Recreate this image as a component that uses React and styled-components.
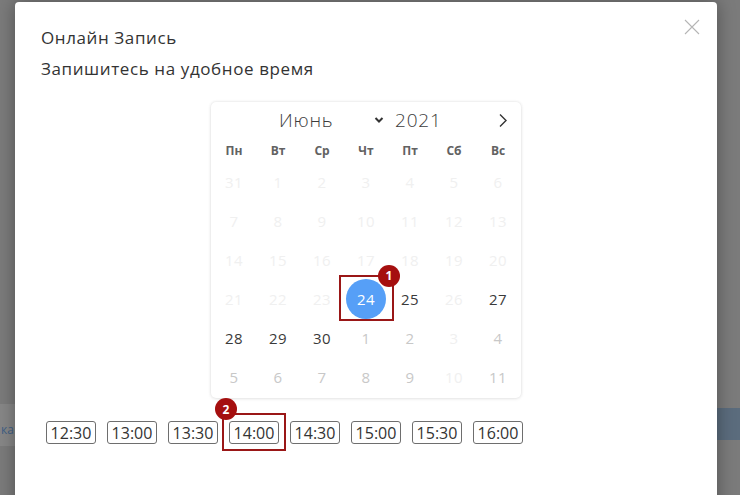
import styled, { createGlobalStyle } from 'styled-components';

const GlobalStyle = createGlobalStyle`
	html, body {
		margin: 0;
		padding: 0;
	}
	body {
		background: linear-gradient(to bottom, #7b7b7b 0, #7b7b7b 408px, #5b6c7d 408px, #5b6c7d 440px, #7b7b7b 440px);
		font-family: 'Open Sans', 'Liberation Sans', sans-serif;
		overflow: hidden;
	}
`;

const weekdays = ['Пн', 'Вт', 'Ср', 'Чт', 'Пт', 'Сб', 'Вс'];

// kind: off = disabled, next = other month (enabled), on = available, sel = chosen
const days = [
	['31', 'off'], ['1', 'off'], ['2', 'off'], ['3', 'off'], ['4', 'off'], ['5', 'off'], ['6', 'off'],
	['7', 'off'], ['8', 'off'], ['9', 'off'], ['10', 'off'], ['11', 'off'], ['12', 'off'], ['13', 'off'],
	['14', 'off'], ['15', 'off'], ['16', 'off'], ['17', 'off'], ['18', 'off'], ['19', 'off'], ['20', 'off'],
	['21', 'off'], ['22', 'off'], ['23', 'off'], ['24', 'sel'], ['25', 'on'], ['26', 'off'], ['27', 'on'],
	['28', 'on'], ['29', 'on'], ['30', 'on'], ['1', 'next'], ['2', 'next'], ['3', 'off'], ['4', 'next'],
	['5', 'next'], ['6', 'next'], ['7', 'next'], ['8', 'next'], ['9', 'next'], ['10', 'off'], ['11', 'next'],
];

const times = ['12:30', '13:00', '13:30', '14:00', '14:30', '15:00', '15:30', '16:00'];

const dayColors = {
	off: '#f0f0f0',
	next: '#c8c8c8',
	on: '#3a3a3a',
	sel: '#ffffff',
};

export default function App() {
	return (
		<>
			<GlobalStyle />
			<Page>
				<Gutter>
					<PeekText>ка</PeekText>
				</Gutter>
				<Modal>
					<Close aria-label="Закрыть">
						<svg width="16" height="16" viewBox="0 0 16 16">
							<path d="M1 1 L15 15 M15 1 L1 15" stroke="#b5b5b5" strokeWidth="1.1" fill="none" />
						</svg>
					</Close>
					<Title>Онлайн Запись</Title>
					<Subtitle>Запишитесь на удобное время</Subtitle>

					<Calendar>
						<MonthBar>
							<Month>Июнь</Month>
							<svg width="10" height="8" viewBox="0 0 10 8">
								<path d="M1.5 2 L5 5.5 L8.5 2" stroke="#333" strokeWidth="2" fill="none" />
							</svg>
							<Year>2021</Year>
							<NextArrow>
								<svg width="10" height="15" viewBox="0 0 10 15">
									<path d="M2 1.5 L8 7.5 L2 13.5" stroke="#333" strokeWidth="1.4" fill="none" />
								</svg>
							</NextArrow>
						</MonthBar>
						<Weekdays>
							{weekdays.map((w) => (
								<Weekday key={w}>{w}</Weekday>
							))}
						</Weekdays>
						<Days>
							{days.map(([d, kind], i) => (
								<Day key={i} kind={kind}>
									{kind === 'sel' ? (
										<Marked>
											<Selected>{d}</Selected>
											<HighlightBox />
											<Badge style={{ top: -14, right: -14 }}>1</Badge>
										</Marked>
									) : (
										d
									)}
								</Day>
							))}
						</Days>
					</Calendar>

					<Times>
						{times.map((t) =>
							t === '14:00' ? (
								<Marked key={t}>
									<Slot>{t}</Slot>
									<SlotBox />
									<Badge style={{ top: -23, left: -14 }}>2</Badge>
								</Marked>
							) : (
								<Slot key={t}>{t}</Slot>
							)
						)}
					</Times>
				</Modal>
			</Page>
		</>
	);
}

const Page = styled.div`
	display: flex;
	height: 495px;
	overflow: hidden;
`;

const Gutter = styled.div`
	width: 15px;
	flex-shrink: 0;
	display: flex;
	justify-content: flex-start;
	align-items: flex-start;
	padding-top: 420px;
	box-sizing: border-box;
	background: linear-gradient(to bottom, #7b7b7b 0, #7b7b7b 404px, #878787 404px, #878787 446px, #7b7b7b 446px);
`;

const PeekText = styled.span`
	font-size: 12px;
	color: #3f5f86;
	white-space: nowrap;
	height: 20px;
	line-height: 20px;
	padding-left: 1px;
`;

const Modal = styled.div`
	position: relative;
	width: 702px;
	flex-shrink: 0;
	margin-top: 2px;
	height: 520px;
	background: #fff;
	border-radius: 4px;
	box-shadow: 0 0 18px rgba(0, 0, 0, 0.35);
	padding: 24px 26px 0 26px;
	box-sizing: border-box;
	color: #333;
`;

const Close = styled.div`
	position: absolute;
	top: 17px;
	right: 17px;
	cursor: pointer;
	line-height: 0;
`;

const Title = styled.div`
	font-size: 17px;
	letter-spacing: 0.6px;
	line-height: 24px;
	color: #333;
`;

const Subtitle = styled(Title)`
	margin-top: 7px;
`;

const Calendar = styled.div`
	width: 310px;
	margin: 21px auto 0 auto;
	box-sizing: border-box;
	padding: 0 1px 2px 1px;
	border-radius: 5px;
	background: #fff;
	box-shadow: 0 0 3px rgba(0, 0, 0, 0.12), 0 1px 4px rgba(0, 0, 0, 0.06);
`;

const MonthBar = styled.div`
	position: relative;
	height: 36px;
	display: flex;
	align-items: center;
	padding-left: 67px;
	svg {
		display: block;
	}
`;

const Month = styled.span`
	font-size: 19px;
	font-weight: 300;
	letter-spacing: 0.8px;
	color: #3c3c3c;
	width: 95px;
`;

const Year = styled.span`
	font-size: 19px;
	font-weight: 300;
	letter-spacing: 0.8px;
	color: #3c3c3c;
	margin-left: 11px;
`;

const NextArrow = styled.span`
	position: absolute;
	right: 12px;
	top: 11px;
`;

const Weekdays = styled.div`
	display: grid;
	grid-template-columns: repeat(7, 44px);
	height: 24px;
	align-items: center;
`;

const Weekday = styled.span`
	text-align: center;
	font-size: 12px;
	font-weight: 700;
	color: #626262;
`;

const Days = styled.div`
	display: grid;
	grid-template-columns: repeat(7, 44px);
	grid-auto-rows: 39px;
`;

const Day = styled.span`
	display: flex;
	align-items: center;
	justify-content: center;
	font-size: 15px;
	letter-spacing: 0.3px;
	color: ${(props) => dayColors[props.kind]};
`;

const Marked = styled.span`
	position: relative;
	display: inline-flex;
`;

const Selected = styled.span`
	width: 40px;
	height: 40px;
	border-radius: 50%;
	background: #569ff7;
	color: #fff;
	display: flex;
	align-items: center;
	justify-content: center;
`;

const HighlightBox = styled.span`
	position: absolute;
	top: -4px;
	left: -7px;
	width: 55px;
	height: 46px;
	box-sizing: border-box;
	border: 2px solid #9a1717;
`;

const Badge = styled.span`
	position: absolute;
	width: 22px;
	height: 22px;
	border-radius: 50%;
	background: #a50f0f;
	color: #fff;
	font-size: 12px;
	font-weight: 700;
	display: flex;
	align-items: center;
	justify-content: center;
	font-family: 'Open Sans', sans-serif;
`;

const Times = styled.div`
	display: flex;
	gap: 11px;
	margin-top: 23px;
	padding-left: 5px;
`;

const Slot = styled.span`
	box-sizing: border-box;
	height: 23px;
	width: 50px;
	display: flex;
	align-items: center;
	justify-content: center;
	border: 1px solid #6e6e6e;
	border-radius: 3px;
	font-size: 16px;
	letter-spacing: 0;
	color: #333;
`;

const SlotBox = styled.span`
	position: absolute;
	top: -8px;
	left: -7px;
	right: -7px;
	bottom: -7px;
	border: 2px solid #9a1717;
`;
